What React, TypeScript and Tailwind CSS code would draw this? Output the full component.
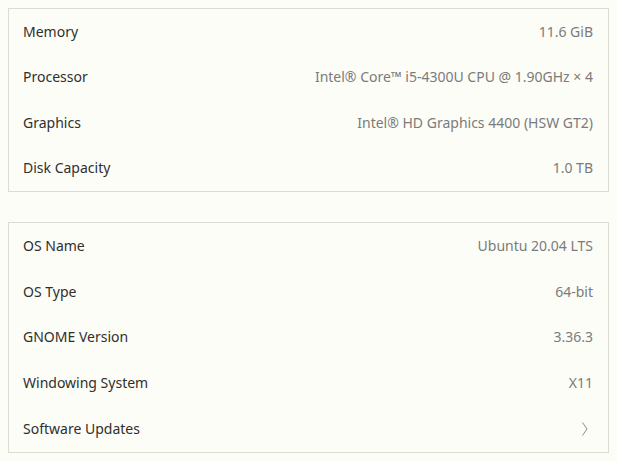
import { ReactNode } from 'react';

const hardware: [string, string][] = [
    ['Memory', '11.6 GiB'],
    ['Processor', 'Intel® Core™ i5-4300U CPU @ 1.90GHz × 4'],
    ['Graphics', 'Intel® HD Graphics 4400 (HSW GT2)'],
    ['Disk Capacity', '1.0 TB'],
];

const software: [string, string][] = [
    ['OS Name', 'Ubuntu 20.04 LTS'],
    ['OS Type', '64-bit'],
    ['GNOME Version', '3.36.3'],
    ['Windowing System', 'X11'],
];

function Row({ label, children }: { label: string; children: ReactNode }) {
    return (
        <div className="flex flex-1 items-center justify-between pl-[14px] pr-[15px] pb-px">
            <span className="text-[#2f2f2f]">{label}</span>
            <span className="text-[#7b7b7b]">{children}</span>
        </div>
    );
}

export default function App() {
    return (
        <div
            className="w-[617px] h-[461px] bg-[#fdfdf7] p-2 text-[14px] flex flex-col gap-[30px]"
            style={{ fontFamily: '"Noto Sans", "Open Sans", sans-serif' }}
        >
            <div className="flex h-[184px] flex-col border border-[#dcdcd4]">
                {hardware.map(([k, v]) => (
                    <Row key={k} label={k}>{v}</Row>
                ))}
            </div>
            <div className="flex h-[231px] flex-col border border-[#dcdcd4]">
                {software.map(([k, v]) => (
                    <Row key={k} label={k}>{v}</Row>
                ))}
                <Row label="Software Updates">
                    <svg width="6" height="16" viewBox="0 0 6 16" className="mr-[5px]">
                        <path d="M0.5 1.5 L5 8 L0.5 14.5" fill="none" stroke="#8a8a8a" strokeWidth="1" />
                    </svg>
                </Row>
            </div>
        </div>
    );
}
